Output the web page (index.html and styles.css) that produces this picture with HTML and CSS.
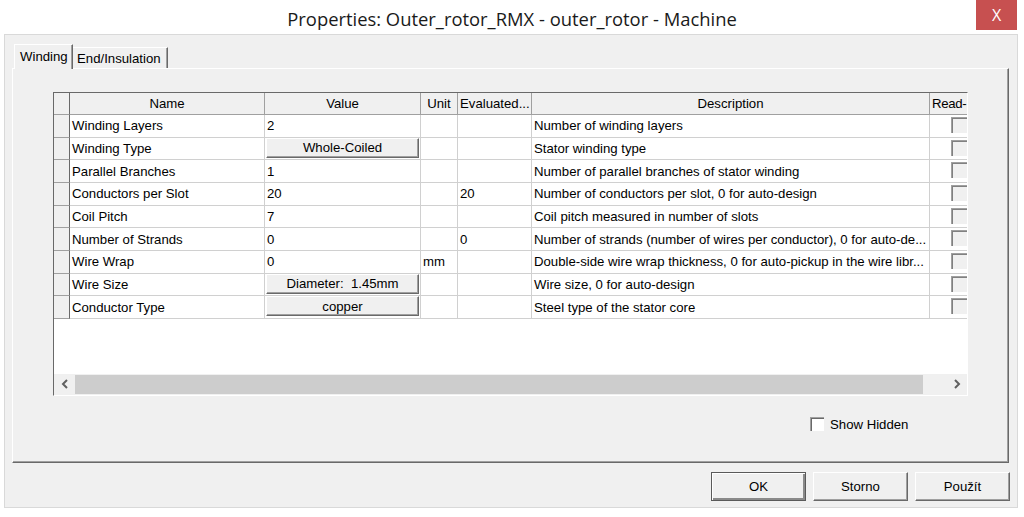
FILE: index.html
```html
<!DOCTYPE html>
<html>
<head>
<meta charset="utf-8">
<link rel="stylesheet" href="styles.css">
</head>
<body>
<div class="window">
  <div class="titlebar">
    <div class="title">Properties: Outer_rotor_RMX - outer_rotor - Machine</div>
    <div class="close">X</div>
  </div>
  <div class="frame">
    <div class="tabs">
      <div class="tab active">Winding</div>
      <div class="tab">End/Insulation</div>
    </div>
    <div class="panel">
      <div class="grid">
        <div class="sheet">
          <div class="cells">
            <div class="c corner"></div>
            <div class="c hd">Name</div>
            <div class="c hd">Value</div>
            <div class="c hd">Unit</div>
            <div class="c hd left">Evaluated...</div>
            <div class="c hd">Description</div>
            <div class="c hd left ro"><span class="ro-text">Read-</span></div>

            <div class="c rh"></div><div class="c">Winding Layers</div><div class="c">2</div><div class="c"></div><div class="c"></div><div class="c">Number of winding layers</div><div class="c rc"><span class="rbox"></span></div>
            <div class="c rh"></div><div class="c">Winding Type</div><div class="c vb"><span class="vbtn">Whole-Coiled</span></div><div class="c"></div><div class="c"></div><div class="c">Stator winding type</div><div class="c rc"><span class="rbox"></span></div>
            <div class="c rh"></div><div class="c">Parallel Branches</div><div class="c">1</div><div class="c"></div><div class="c"></div><div class="c">Number of parallel branches of stator winding</div><div class="c rc"><span class="rbox"></span></div>
            <div class="c rh"></div><div class="c">Conductors per Slot</div><div class="c">20</div><div class="c"></div><div class="c">20</div><div class="c">Number of conductors per slot, 0 for auto-design</div><div class="c rc"><span class="rbox"></span></div>
            <div class="c rh"></div><div class="c">Coil Pitch</div><div class="c">7</div><div class="c"></div><div class="c"></div><div class="c">Coil pitch measured in number of slots</div><div class="c rc"><span class="rbox"></span></div>
            <div class="c rh"></div><div class="c">Number of Strands</div><div class="c">0</div><div class="c"></div><div class="c">0</div><div class="c">Number of strands (number of wires per conductor), 0 for auto-de...</div><div class="c rc"><span class="rbox"></span></div>
            <div class="c rh"></div><div class="c">Wire Wrap</div><div class="c">0</div><div class="c">mm</div><div class="c"></div><div class="c">Double-side wire wrap thickness, 0 for auto-pickup in the wire libr...</div><div class="c rc"><span class="rbox"></span></div>
            <div class="c rh"></div><div class="c">Wire Size</div><div class="c vb"><span class="vbtn">Diameter:&nbsp; 1.45mm</span></div><div class="c"></div><div class="c"></div><div class="c">Wire size, 0 for auto-design</div><div class="c rc"><span class="rbox"></span></div>
            <div class="c rh"></div><div class="c">Conductor Type</div><div class="c vb"><span class="vbtn">copper</span></div><div class="c"></div><div class="c"></div><div class="c">Steel type of the stator core</div><div class="c rc"><span class="rbox"></span></div>
          </div>
        </div>
        <div class="hscroll">
          <div class="arrow"><svg width="8" height="10" viewBox="0 0 8 10"><path d="M6 1 L2 5 L6 9" fill="none" stroke="#606060" stroke-width="2"/></svg></div>
          <div class="thumb"></div>
          <div class="track"></div>
          <div class="arrow"><svg width="8" height="10" viewBox="0 0 8 10"><path d="M2 1 L6 5 L2 9" fill="none" stroke="#606060" stroke-width="2"/></svg></div>
        </div>
      </div>
      <div class="options">
        <span class="cbox"></span>
        <span>Show Hidden</span>
      </div>
    </div>
    <div class="buttons">
      <div class="btn default">OK</div>
      <div class="btn">Storno</div>
      <div class="btn">Použít</div>
    </div>
  </div>
</div>
</body>
</html>
```
FILE: styles.css
```css
* { box-sizing: border-box; }
body {
  margin: 0;
  background: #ffffff;
  font-family: "Liberation Sans", Arial, sans-serif;
  font-size: 13.2px;
  color: #000;
}
.window {
  width: 1024px;
  height: 517px;
  display: flex;
  flex-direction: column;
}
.titlebar {
  height: 34px;
  display: grid;
  grid-template-columns: 1fr auto 1fr;
  align-items: start;
}
.title {
  grid-column: 2;
  font-family: "Open Sans", "Noto Sans", sans-serif;
  font-size: 18.4px;
  line-height: 24px;
  padding-top: 7px;
  color: #1a1a1a;
}
.close {
  grid-column: 3;
  justify-self: end;
  width: 41px;
  height: 30px;
  margin-right: 7px;
  background: #c75050;
  color: #fff;
  font-family: "Open Sans", sans-serif;
  font-size: 16px;
  display: flex;
  align-items: center;
  justify-content: center;
}
.frame {
  margin: 0 6px 9px 4px;
  height: 474px;
  border: 1px solid #d9d9d9;
  background: #f0f0f0;
  padding: 9px 8px 0 7px;
  display: flex;
  flex-direction: column;
}
.tabs {
  display: flex;
  align-items: flex-end;
  padding-left: 2px;
  height: 25px;
  margin-bottom: -1px;
  position: relative;
  z-index: 1;
}
.tab {
  height: 21px;
  width: 95px;
  margin-bottom: 1px;
  border-top: 1px solid #fff;
  border-right: 1px solid #696969;
  box-shadow: inset -1px 0 0 #a0a0a0;
  padding: 3px 0 0 4px;
  line-height: 16px;
  white-space: nowrap;
}
.tab.active {
  height: 25px;
  width: 59px;
  margin-bottom: 0;
  border-left: 1px solid #fff;
  background: #f0f0f0;
  padding: 4px 0 0 5px;
}
.panel {
  height: 395px;
  border: 1px solid;
  border-color: #fff #696969 #696969 #fff;
  box-shadow: inset -1px -1px 0 #a0a0a0;
  padding: 23px 0 0 40px;
}
.grid {
  width: 915px;
  border-left: 1px solid #696969;
  border-top: 1px solid #696969;
  border-right: 1px solid #fff;
  border-bottom: 1px solid #fff;
  background: #f0f0f0;
  padding-bottom: 1px;
  display: flex;
  flex-direction: column;
}
.sheet {
  height: 281px;
  background: #fff;
  overflow: hidden;
}
.cells {
  display: grid;
  grid-template-columns: 16px 195px 156px 37px 74px 398px 70px;
  grid-template-rows: 22px repeat(9, 22.667px);
  width: max-content;
}
.c {
  border-right: 1px solid #d0d0d0;
  border-bottom: 1px solid #d0d0d0;
  padding: 0 2px;
  white-space: nowrap;
  overflow: hidden;
  display: flex;
  align-items: center;
  background: #fff;
}
.c.hd, .c.corner {
  background: #f0f0f0;
  border-right-color: #a0a0a0;
  border-bottom-color: #a0a0a0;
  justify-content: center;
}
.c.hd.left { justify-content: flex-start; }
.c.hd.ro { padding-left: 2px; }
.ro-text { letter-spacing: -0.3px; }
.c.corner, .c.rh {
  background: #f0f0f0;
  border-right-color: #696969;
  border-bottom-color: #a0a0a0;
}
.c.vb {
  padding: 0 1px;
  align-items: flex-start;
}
.vbtn {
  flex: 1;
  height: 20px;
  background: #f0f0f0;
  border-top: 1px solid #fff;
  border-left: 1px solid #fff;
  border-right: 1px solid #696969;
  border-bottom: 1px solid #696969;
  box-shadow: inset -1px -1px 0 #a0a0a0;
  display: flex;
  align-items: center;
  justify-content: center;
}
.c.rc { align-items: flex-start; }
.rbox {
  width: 18px;
  height: 16px;
  margin: 2px 0 0 19px;
  background: #f0f0f0;
  border-top: 1px solid #a0a0a0;
  border-left: 1px solid #a0a0a0;
  box-shadow: inset 1px 1px 0 #808080;
  flex: none;
}
.hscroll {
  height: 20px;
  display: flex;
  background: #f0f0f0;
}
.arrow {
  width: 21px;
  flex: none;
  display: flex;
  align-items: center;
  justify-content: center;
}
.thumb {
  width: 848px;
  flex: none;
  background: #cdcdcd;
  margin-top: 1px;
}
.track { flex: 1; }
.options {
  display: flex;
  align-items: center;
  gap: 6px;
  margin-top: 21px;
  padding-left: 757px;
  height: 14px;
}
.cbox {
  width: 14px;
  height: 14px;
  background: #fff;
  border-top: 1px solid #a0a0a0;
  border-left: 1px solid #a0a0a0;
  box-shadow: inset 1px 1px 0 #696969;
  flex: none;
}
.buttons {
  display: flex;
  justify-content: flex-end;
  gap: 7px;
  margin-top: 9px;
  margin-right: -1px;
}
.btn {
  width: 95px;
  height: 29px;
  background: #f0f0f0;
  border-top: 1px solid #fff;
  border-left: 1px solid #fff;
  border-right: 1px solid #696969;
  border-bottom: 1px solid #696969;
  box-shadow: inset -1px -1px 0 #a0a0a0;
  display: flex;
  align-items: center;
  justify-content: center;
}
.btn.default {
  border: 1px solid #5a5a5a;
  box-shadow: inset 1px 1px 0 #fff, inset -2px -2px 0 #8a8a8a;
}
```
